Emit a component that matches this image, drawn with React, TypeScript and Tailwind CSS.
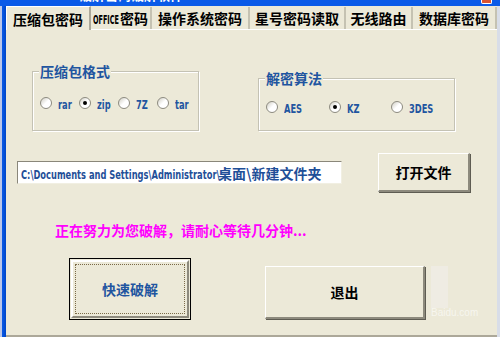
import React from 'react';

const cjk = "font-['Noto_Sans_CJK_SC',sans-serif] font-bold";
const narrow = "font-['DejaVu_Sans_Condensed','DejaVu_Sans',sans-serif] font-bold";

const tabs = [
  { label: '压缩包密码', w: 'w-[85px]', active: true },
  { label: 'OFFICE密码', w: 'w-[61px]' },
  { label: '操作系统密码', w: 'w-[98px]' },
  { label: '星号密码读取', w: 'w-[96px]' },
  { label: '无线路由', w: 'w-[67px]' },
  { label: '数据库密码', w: 'w-[84px]' },
];

// squeezes latin text to look like the narrow bold system font
function Narrow({ text, w, size = 'text-[13px]', sx = 'scale-x-[0.71]' }: { text: string; w: string; size?: string; sx?: string }) {
  return (
    <span className={`inline-block ${w} whitespace-nowrap`}>
      <span className={`inline-block origin-left ${sx} ${narrow} ${size} leading-none`}>{text}</span>
    </span>
  );
}

function Radio({ label, checked, w, lw }: { label: string; checked?: boolean; w: string; lw: string }) {
  return (
    <div className={`flex items-center gap-[6px] ${w}`}>
      <span className="w-[12px] h-[12px] rounded-full border border-[#8d8b80] bg-gradient-to-br from-[#cfcdc2] via-white to-white flex items-center justify-center shrink-0">
        {checked && <span className="w-[4px] h-[4px] rounded-full bg-black" />}
      </span>
      <span className="text-[#1f55a0]">
        <Narrow text={label} w={lw} />
      </span>
    </div>
  );
}

export default function App() {
  return (
    <div className="w-[500px] h-[337px] bg-[#ECE9D8] overflow-hidden flex flex-col">
      {/* title bar, mostly cut off */}
      <div className="h-[6px] bg-[#0a5ae8] overflow-hidden flex shrink-0">
        <span className="ml-[6px] -mt-[11px] text-white text-[13px] leading-[14px] font-bold font-['Liberation_Sans','Noto_Sans_CJK_SC',sans-serif]">
          Fastcracker破解密码破解软件
        </span>
        <span className="ml-auto mr-[8px] w-[11px] h-[4px] bg-[#d9532f] border-x border-b border-white rounded-b-[2px]" />
      </div>

      <div className="flex flex-1">
        <div className="w-[6px] border-l-2 border-[#b9c6ea] bg-gradient-to-r from-[#0a5ae8] to-[#0046c8]" />

        <div className="flex-1 flex flex-col">
          {/* tabs */}
          <div className="h-[24px] flex items-end border-b border-white">
            {tabs.map(t => (
              <div
                key={t.label}
                className={`${t.w} ${t.active ? 'h-[24px] -mb-px bg-[#ECE9D8] border-l border-t border-white border-r-2 border-r-[#aca899]' : 'h-[22px] border-r-2 border-[#c5c2b2]'} flex items-center justify-center ${cjk} text-[14px] text-black leading-none whitespace-nowrap`}
              >
                {t.label === 'OFFICE密码' ? (
                  <>
                    <Narrow text="OFFICE" w="w-[27px]" size="text-[12px]" sx="scale-x-[0.6]" />
                    密码
                  </>
                ) : (
                  t.label
                )}
              </div>
            ))}
          </div>

          {/* panel */}
          <div className="flex-1 flex flex-col">
            <div className="flex items-end mt-[41px]">
              <div className="relative ml-[26px] w-[167px] h-[60px] border border-[#c4c2b4] shadow-[inset_1px_1px_0_#fff,1px_1px_0_#fff] flex items-center pl-[7px] pt-[4px]">
                <span className={`absolute left-[6px] -top-[9px] px-px bg-[#ECE9D8] ${cjk} text-[14px] leading-[16px] text-[#1f55a0]`}>压缩包格式</span>
                <Radio label="rar" w="w-[39px]" lw="w-[16px]" />
                <Radio label="zip" checked w="w-[39px]" lw="w-[16px]" />
                <Radio label="7Z" w="w-[39px]" lw="w-[16px]" />
                <Radio label="tar" w="w-[39px]" lw="w-[16px]" />
              </div>

              <div className="relative ml-[59px] w-[197px] h-[53px] border border-[#c4c2b4] shadow-[inset_1px_1px_0_#fff,1px_1px_0_#fff] flex items-center pl-[7px] pt-[4px]">
                <span className={`absolute left-[6px] -top-[9px] px-px bg-[#ECE9D8] ${cjk} text-[14px] leading-[16px] text-[#1f55a0]`}>解密算法</span>
                <Radio label="AES" w="w-[63px]" lw="w-[20px]" />
                <Radio label="KZ" checked w="w-[62px]" lw="w-[16px]" />
                <Radio label="3DES" w="w-[60px]" lw="w-[24px]" />
              </div>
            </div>

            <div className="flex items-center mt-[22px]">
              <div className="ml-[11px] w-[325px] h-[23px] bg-white border-t border-l border-[#8a877a] border-r border-b border-r-[#f1efe2] border-b-[#f1efe2] flex items-center pl-[3px] whitespace-nowrap overflow-hidden text-[#1f4f98]">
                <Narrow text="C:\Documents and Settings\Administrator\" w="w-[197px]" />
                <span className={`${cjk} text-[14px] leading-none`}>桌面\新建文件夹</span>
              </div>
              <button className={`ml-[36px] w-[92px] h-[39px] bg-[#ECE9D8] border border-white border-r-2 border-b-2 border-r-[#8d8a7d] border-b-[#8d8a7d] shadow-[1px_1px_0_#5e5c52] ${cjk} text-[14px] text-black`}>
                打开文件
              </button>
            </div>

            <div className={`ml-[49px] mt-[30px] ${cjk} text-[14px] leading-[16px] text-[#ff00ff]`}>
              正在努力为您破解，请耐心等待几分钟...
            </div>

            <div className="flex items-start mt-[20px]">
              <button className="ml-[63px] w-[122px] h-[62px] bg-[#ECE9D8] border border-black p-[1px]">
                <div className="w-full h-full border-2 border-t-white border-l-white border-r-[#8d8a7d] border-b-[#8d8a7d] p-[2px]">
                  <div className={`w-full h-full border border-dotted border-[#7a6a48] flex items-center justify-center ${cjk} text-[14px] text-[#1f55a0]`}>
                    快速破解
                  </div>
                </div>
              </button>
              <button className={`ml-[74px] mt-[8px] w-[160px] h-[53px] bg-[#ECE9D8] border border-white border-r-2 border-b-2 border-r-[#8d8a7d] border-b-[#8d8a7d] shadow-[1px_1px_0_#5e5c52] ${cjk} text-[14px] text-black`}>
                退出
              </button>
              <div className="ml-[6px] mt-[8px] w-[17px] h-[42px] bg-[#efece3] flex items-end">
                <span className="-mb-[10px] text-[10px] leading-none text-white/60 font-['Liberation_Sans',sans-serif] whitespace-nowrap">Baidu.com</span>
              </div>
            </div>
          </div>

          <div className="h-[2px] bg-[#aca899]" />
        </div>

        <div className="w-[3px] bg-[#d8dde8]" />
      </div>
    </div>
  );
}
